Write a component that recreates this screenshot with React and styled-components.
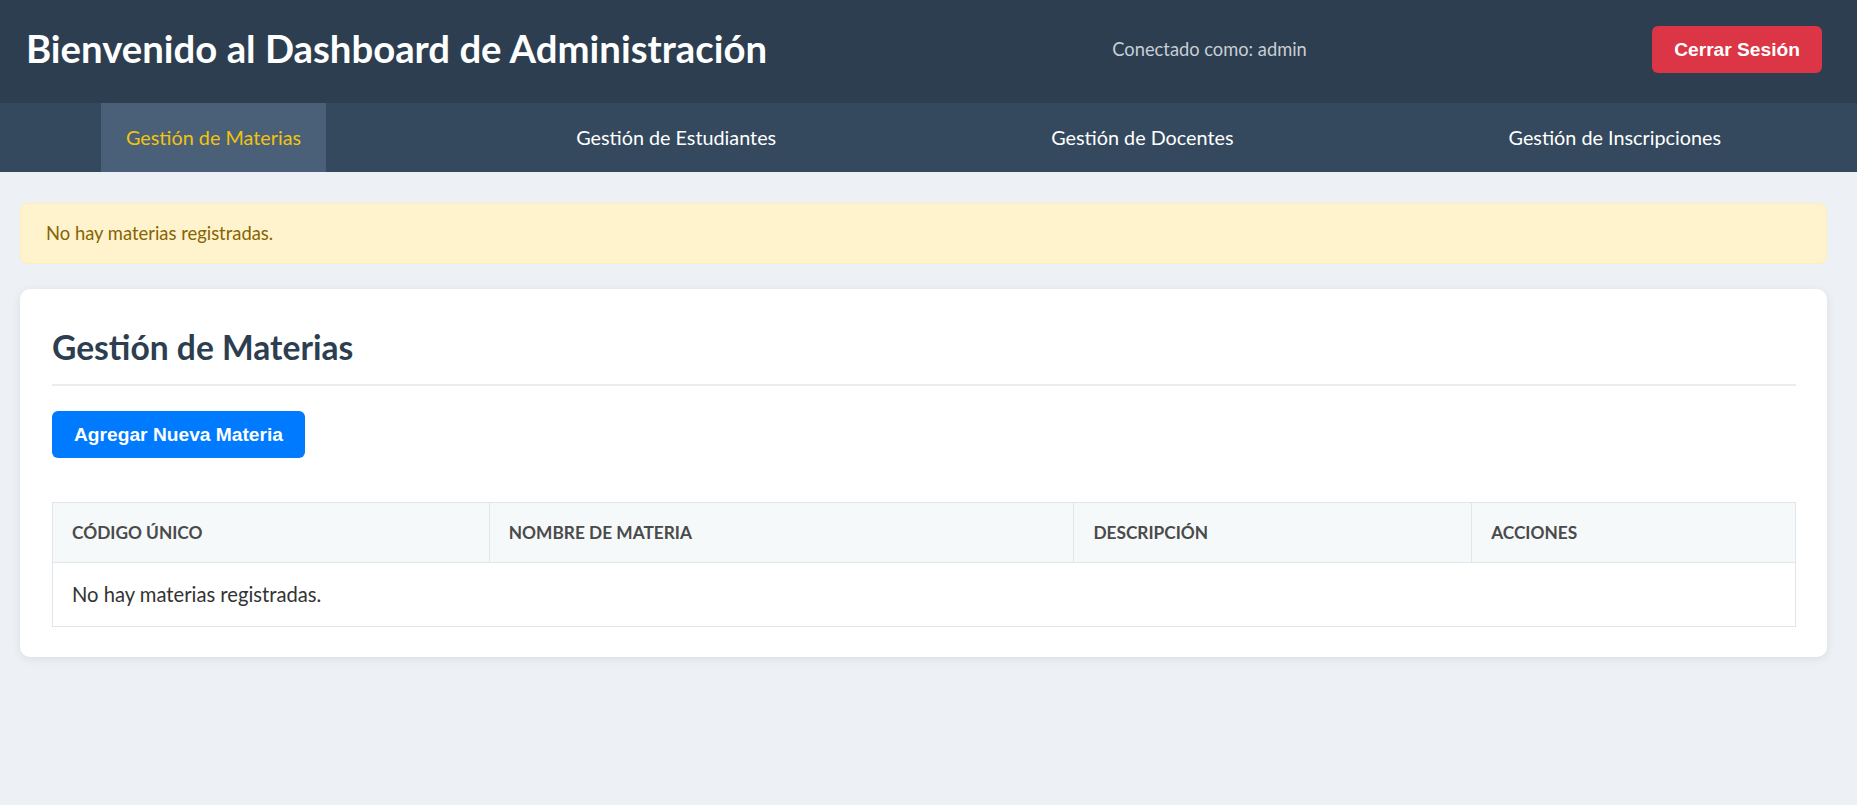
import styled, { createGlobalStyle } from 'styled-components'

const GlobalStyle = createGlobalStyle`
    * {
        box-sizing: border-box;
    }
    body {
        margin: 0;
        background-color: #edf0f5;
        font-family: "Segoe UI", Lato, "Noto Sans", sans-serif;
        color: #333;
    }
`

const Header = styled.header`
    display: flex;
    justify-content: space-between;
    align-items: center;
    height: 103px;
    padding: 0 35px 5px 26px;
    background-color: #2c3e50;
    color: white;
    h1{
        margin: 0;
        font-size: 38.3px;
        font-weight: 700;
        line-height: 1.2;
    }
`

const UserInfo = styled.span`
    font-size: 18.3px;
    color: #c8ced6;
`

const Button = styled.button`
    border: none;
    border-radius: 6px;
    padding: 12px 22px;
    font-family: "Liberation Sans", Arial, sans-serif;
    font-size: 19.2px;
    line-height: 23px;
    font-weight: 700;
    color: white;
    cursor: pointer;
    background-color: ${props => props.$danger ? '#dc3545' : '#007bff'};
`

const Nav = styled.nav`
    display: flex;
    justify-content: space-between;
    padding: 0 111px 0 101px;
    background-color: #34495e;
`

const Tab = styled.a`
    display: block;
    padding: 22px 25px;
    font-size: 19.8px;
    line-height: 25px;
    text-decoration: none;
    color: ${props => props.$active ? '#f1c40f' : 'white'};
    background-color: ${props => props.$active ? '#4a6078' : 'transparent'};
`

const Main = styled.main`
    display: flex;
    flex-direction: column;
    gap: 25px;
    padding: 31px 30px 40px 20px;
`

const Alert = styled.div`
    padding: 19px 25px;
    border: 1px solid #ffeeba;
    border-radius: 8px;
    background-color: #fff3cd;
    color: #856404;
    font-size: 18.4px;
    line-height: 21px;
`

const Card = styled.section`
    padding: 38px 31px 30px 32px;
    border-radius: 10px;
    background-color: white;
    box-shadow: 0 2px 10px rgba(0, 0, 0, 0.08);
    h2{
        margin: 0 0 25px;
        padding-bottom: 17px;
        border-bottom: 2px solid #eaecef;
        font-size: 33.6px;
        line-height: 40px;
        font-weight: 700;
        color: #2c3e50;
    }
`

const Table = styled.table`
    width: 100%;
    margin-top: 44px;
    border-collapse: collapse;
    table-layout: fixed;
`

const Th = styled.th`
    width: ${props => props.$w};
    padding: 19px 19px;
    border: 1px solid #e1e6ec;
    background-color: #f6f9fa;
    text-align: left;
    text-transform: uppercase;
    font-size: 17.3px;
    line-height: 21px;
    font-weight: 700;
    color: #4a4a4a;
`

const Td = styled.td`
    padding: 20px 19px;
    border: 1px solid #e1e6ec;
    font-size: 20.2px;
    line-height: 23px;
    color: #333;
`

const columns = [
    { label: 'Código Único', w: '25.06%' },
    { label: 'Nombre de Materia', w: '33.54%' },
    { label: 'Descripción', w: '22.82%' },
    { label: 'Acciones', w: '18.58%' },
]

const tabs = ['Gestión de Materias', 'Gestión de Estudiantes', 'Gestión de Docentes', 'Gestión de Inscripciones']

function App() {

    const materias = []

    return (
        <>
            <GlobalStyle />
            <Header>
                <h1>Bienvenido al Dashboard de Administración</h1>
                <UserInfo>Conectado como: admin</UserInfo>
                <Button $danger>Cerrar Sesión</Button>
            </Header>
            <Nav>
                {tabs.map((tab, i) => (
                    <Tab key={tab} href="#" $active={i === 0}>{tab}</Tab>
                ))}
            </Nav>
            <Main>
                {materias.length === 0 ? <Alert>No hay materias registradas.</Alert> : null}
                <Card>
                    <h2>Gestión de Materias</h2>
                    <Button>Agregar Nueva Materia</Button>
                    <Table>
                        <thead>
                            <tr>
                                {columns.map(col => <Th key={col.label} $w={col.w}>{col.label}</Th>)}
                            </tr>
                        </thead>
                        <tbody>
                            <tr>
                                <Td colSpan={4}>No hay materias registradas.</Td>
                            </tr>
                        </tbody>
                    </Table>
                </Card>
            </Main>
        </>
    )
}

export default App
